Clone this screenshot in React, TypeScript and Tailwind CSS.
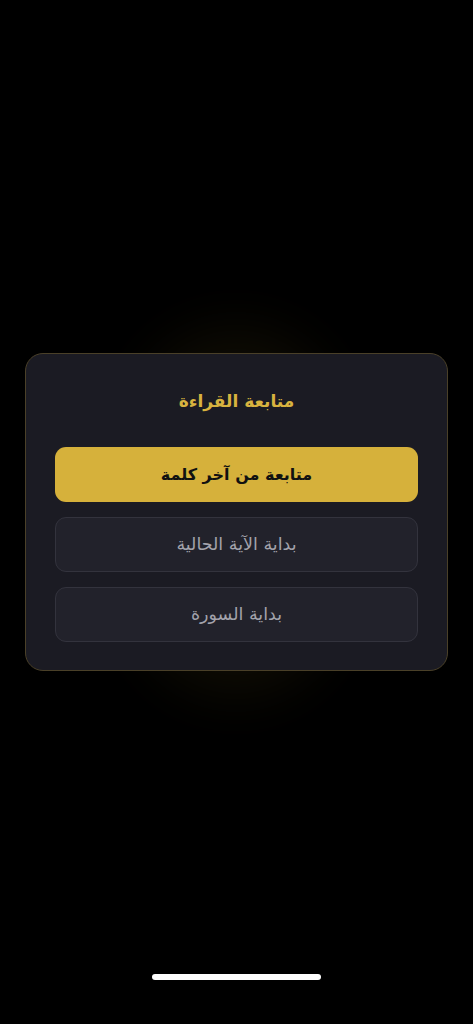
import React from 'react';

const options = [
  { id: 'last-word', label: 'متابعة من آخر كلمة', primary: true },
  { id: 'ayah-start', label: 'بداية الآية الحالية', primary: false },
  { id: 'surah-start', label: 'بداية السورة', primary: false },
];

export default function App() {
  return (
    <div
      dir="rtl"
      className="relative w-full h-[1024px] bg-black flex items-center justify-center"
      style={{ fontFamily: '"DejaVu Sans", sans-serif' }}
    >
      {/* soft gold glow behind the dialog */}
      <div className="absolute left-[136px] top-[330px] w-[200px] h-[364px] rounded-full bg-[#d6b13b] opacity-[0.07] blur-[30px]" />
      <div className="relative w-[423px] h-[318px] rounded-[18px] border border-[#4a4028] bg-[#1b1b23] px-[29px] pt-[33px] flex flex-col">
        <h2 className="text-center text-[17px] leading-[28px] font-bold text-[#d8b33f]">
          متابعة القراءة
        </h2>
        <div className="mt-[32px] flex flex-col gap-[15px]">
          {options.map((o) =>
            o.primary ? (
              <button
                key={o.id}
                className="h-[55px] w-full rounded-[11px] bg-[#d6b13b] text-[#111] text-[16px] font-bold flex items-center justify-center"
              >
                {o.label}
              </button>
            ) : (
              <button
                key={o.id}
                className="h-[55px] w-full rounded-[11px] bg-[#22222b] border border-[#33333d] text-[#a3a3ab] text-[17.5px] flex items-center justify-center"
              >
                {o.label}
              </button>
            )
          )}
        </div>
      </div>
      <div className="absolute left-[152px] top-[974px] w-[169px] h-[6px] rounded-full bg-white" />
    </div>
  );
}
